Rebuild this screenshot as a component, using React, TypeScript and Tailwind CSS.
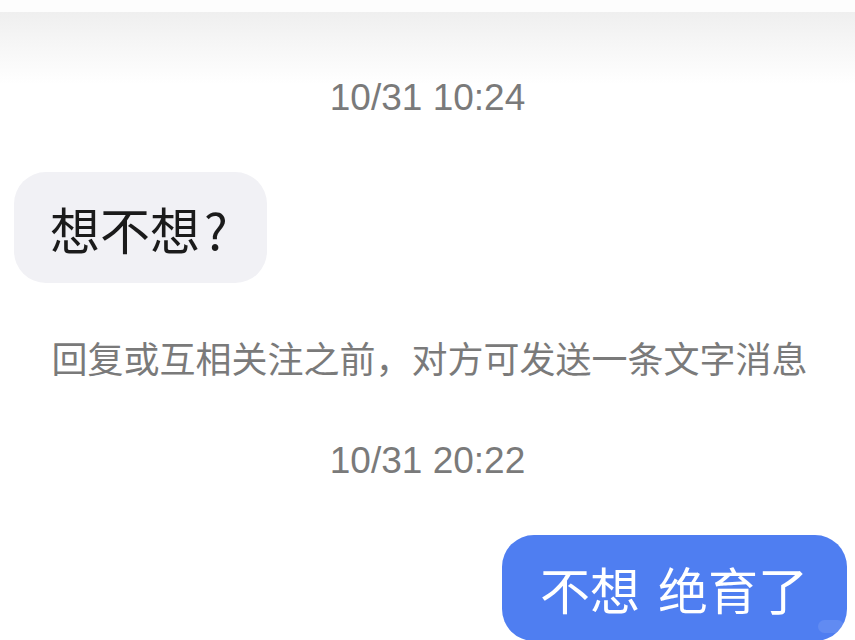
export default function App() {
  return (
    <div
      className="relative w-[855px] h-[640px] overflow-hidden bg-white"
      style={{ fontFamily: '"Liberation Sans", "Noto Sans CJK SC", sans-serif' }}
    >
      {/* top fade under the nav bar */}
      <div className="h-[12px] bg-[#fdfdfd]" />
      <div className="h-[72px] bg-gradient-to-b from-[#efefef] via-[#f7f7f7] to-white" />

      <div className="-mt-[4px] flex flex-col">
        <div className="text-center text-[37px] leading-[36px] text-[#7a7a7a]">10/31 10:24</div>

        <div className="mt-[56px] ml-[14px] flex">
          <div className="h-[111px] w-[253px] rounded-[32px] bg-[#f1f1f5] pl-[36px] flex items-center">
            <span
              className="text-[50px] leading-none text-[#1b1b1b]"
              style={{ fontFamily: '"Noto Sans CJK SC", sans-serif' }}
            >
              想不想<span className="ml-[4px]">?</span>
            </span>
          </div>
        </div>

        <div
          className="mt-[54px] pl-[4px] text-center text-[36px] leading-[40px] text-[#7a7a7a]"
          style={{ fontFamily: '"Noto Sans CJK SC", sans-serif' }}
        >
          回复或互相关注之前，对方可发送一条文字消息
        </div>

        <div className="mt-[66px] text-center text-[37px] leading-[36px] text-[#7a7a7a]">10/31 20:22</div>

        <div className="mt-[56px] mr-[8px] flex justify-end">
          <div className="relative h-[106px] w-[345px] rounded-[32px] bg-[#4f7ef1] pl-[38px] flex items-center">
            <span
              className="text-[50px] leading-none text-white"
              style={{ fontFamily: '"Noto Sans CJK SC", sans-serif' }}
            >
              不想<span className="ml-[18px]">绝育了</span>
            </span>
            <span className="absolute right-[3px] bottom-[8px] h-[13px] w-[26px] rounded-full bg-white/10" />
          </div>
        </div>
      </div>
    </div>
  );
}
